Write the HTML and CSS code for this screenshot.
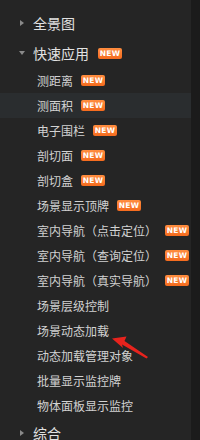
FILE: index.html
```html
<!DOCTYPE html>
<html lang="zh">
<head>
<meta charset="utf-8">
<link rel="stylesheet" href="styles.css">
</head>
<body>
<div class="panel">
  <div class="tree">
    <div class="node"><span class="caret"><span class="tri-right"></span></span><span class="label">全景图</span></div>
    <div class="node"><span class="caret"><span class="tri-down"></span></span><span class="label">快速应用</span><span class="badge">NEW</span></div>
    <div class="sub">
      <div class="item">测距离<span class="badge">NEW</span></div>
      <div class="item active">测面积<span class="badge">NEW</span></div>
      <div class="item">电子围栏<span class="badge">NEW</span></div>
      <div class="item">剖切面<span class="badge">NEW</span></div>
      <div class="item">剖切盒<span class="badge">NEW</span></div>
      <div class="item">场景显示顶牌<span class="badge">NEW</span></div>
      <div class="item">室内导航（点击定位）<span class="badge">NEW</span></div>
      <div class="item">室内导航（查询定位）<span class="badge">NEW</span></div>
      <div class="item">室内导航（真实导航）<span class="badge">NEW</span></div>
      <div class="item">场景层级控制</div>
      <div class="item">场景动态加载</div>
      <div class="item">动态加载管理对象</div>
      <div class="item">批量显示监控牌</div>
      <div class="item">物体面板显示监控</div>
    </div>
    <div class="node"><span class="caret"><span class="tri-right"></span></span><span class="label">综合</span></div>
  </div>
  <div class="scrollbar"></div>
  <svg class="arrow" width="200" height="440" viewBox="0 0 200 440">
    <polygon points="112,338.5 126.5,336.5 124.5,341 148,357 146.5,358.5 122,344.5 123,348" fill="#e8231d"/>
  </svg>
</div>
</body>
</html>
```
FILE: styles.css
```css
html, body {
  margin: 0;
  padding: 0;
  background: #252525;
}
.panel {
  position: relative;
  display: flex;
  width: 200px;
  height: 440px;
  overflow: hidden;
  font-family: "Noto Sans CJK SC", "Noto Sans", sans-serif;
}
.tree {
  flex: 1;
  padding-top: 8px;
  overflow: hidden;
}
.scrollbar {
  width: 9px;
  background: #1b1b1b;
}
.node {
  display: flex;
  align-items: center;
  height: 30px;
  padding-left: 19px;
  color: #e2e2e2;
  font-size: 14px;
  white-space: nowrap;
}
.caret {
  width: 6px;
  margin-right: 8px;
  display: flex;
  align-items: center;
}
.tri-right {
  margin-left: 1px;
  width: 0;
  height: 0;
  border-left: 4px solid #8a8a8a;
  border-top: 3.5px solid transparent;
  border-bottom: 3.5px solid transparent;
}
.tri-down {
  width: 0;
  height: 0;
  border-top: 4px solid #8a8a8a;
  border-left: 3px solid transparent;
  border-right: 3px solid transparent;
}
.badge {
  display: inline-flex;
  align-items: center;
  justify-content: center;
  width: 24px;
  height: 11px;
  margin-left: 8px;
  border-radius: 2px;
  background: linear-gradient(#ff8d3f, #f56b1e);
  color: #fff;
  font-family: "DejaVu Sans", sans-serif;
  font-weight: bold;
  font-size: 7.5px;
  letter-spacing: 0.3px;
  line-height: 11px;
}
.node .badge {
  margin-left: 9px;
}
.item {
  display: flex;
  align-items: center;
  height: 25px;
  padding-left: 37px;
  color: #d2d2d2;
  font-size: 12px;
  white-space: nowrap;
}
.item.active {
  background: #2a2d2f;
}
.arrow {
  position: absolute;
  left: 0;
  top: 0;
  pointer-events: none;
}
```
